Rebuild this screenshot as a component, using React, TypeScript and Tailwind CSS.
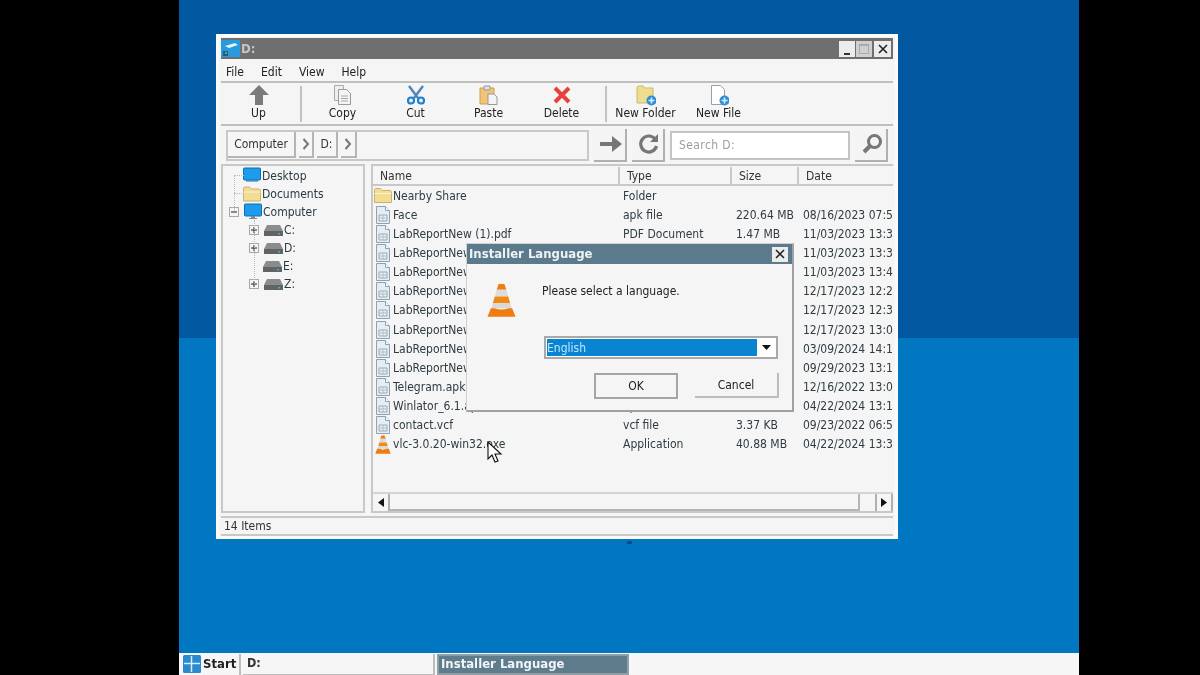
import React from 'react';

const rows = [
  { name: 'Nearby Share', type: 'Folder', size: '', date: '', icon: 'folder' },
  { name: 'Face', type: 'apk file', size: '220.64 MB', date: '08/16/2023 07:52', icon: 'file' },
  { name: 'LabReportNew (1).pdf', type: 'PDF Document', size: '1.47 MB', date: '11/03/2023 13:31', icon: 'file' },
  { name: 'LabReportNew (2).pdf', type: 'PDF Document', size: '1.47 MB', date: '11/03/2023 13:35', icon: 'file' },
  { name: 'LabReportNew (3).pdf', type: 'PDF Document', size: '1.47 MB', date: '11/03/2023 13:42', icon: 'file' },
  { name: 'LabReportNew (4).pdf', type: 'PDF Document', size: '1.47 MB', date: '12/17/2023 12:20', icon: 'file' },
  { name: 'LabReportNew (5).pdf', type: 'PDF Document', size: '1.47 MB', date: '12/17/2023 12:31', icon: 'file' },
  { name: 'LabReportNew (6).pdf', type: 'PDF Document', size: '1.47 MB', date: '12/17/2023 13:05', icon: 'file' },
  { name: 'LabReportNew (7).pdf', type: 'PDF Document', size: '1.47 MB', date: '03/09/2024 14:12', icon: 'file' },
  { name: 'LabReportNew (8).pdf', type: 'PDF Document', size: '1.47 MB', date: '09/29/2023 13:14', icon: 'file' },
  { name: 'Telegram.apk', type: 'apk file', size: '70.12 MB', date: '12/16/2022 13:02', icon: 'file' },
  { name: 'Winlator_6.1.apk', type: 'apk file', size: '80.50 MB', date: '04/22/2024 13:11', icon: 'file' },
  { name: 'contact.vcf', type: 'vcf file', size: '3.37 KB', date: '09/23/2022 06:58', icon: 'file' },
  { name: 'vlc-3.0.20-win32.exe', type: 'Application', size: '40.88 MB', date: '04/22/2024 13:33', icon: 'cone' },
];

const FileIcon = () => (
  <svg width="14" height="18" viewBox="0 0 14 18" className="shrink-0">
    <path d="M.5.5h9l4 4v13H.5z" fill="#e6eef4" stroke="#8da3b3" />
    <path d="M9.5.5v4h4" fill="#fff" stroke="#8da3b3" />
    <path d="M3 9h8v6H3z" fill="none" stroke="#9aa9b4" />
    <path d="M3 12h8M7 9v6" stroke="#b4bfc7" />
  </svg>
);

const FolderIcon = ({ w = 18, h = 17 }: { w?: number; h?: number }) => (
  <svg width={w} height={h} viewBox="0 0 18 15" className="shrink-0">
    <path d="M.5 14.5V1.500l1-1h5l2 2h8l1 1v11z" fill="#f3dc95" stroke="#c9b26b" />
    <path d="M.5 5.500h17" stroke="#fff3c8" />
  </svg>
);

const Cone = ({ size = 16 }: { size?: number }) => (
  <svg width={size} height={size * 1.2} viewBox="0 0 30 36" className="shrink-0">
    <path d="M12 1h6l2 6H10z" fill="#ee7d11" />
    <path d="M10 7h10l2 7H8z" fill="#dcdcdc" />
    <path d="M8 14h14l2 7H6z" fill="#f08a16" />
    <path d="M6 21h18l1.500 5h-21z" fill="#d9d9d9" />
    <path d="M4 26h4q7 3 14 0h4l3.500 9H.5z" fill="#ee7d11" />
  </svg>
);

const Drive = () => (
  <svg width="19" height="11" viewBox="0 0 19 11" className="shrink-0">
    <path d="M3 0h13l3 6v5H0V6z" fill="#8c8c8c" />
    <path d="M0 6h19v5H0z" fill="#5f6466" />
    <path d="M14 8h2v1.500h-2z" fill="#35c0a0" />
  </svg>
);

const Monitor = ({ stand = false }: { stand?: boolean }) => (
  <svg width="18" height="18" viewBox="0 0 18 18" className="shrink-0">
    <rect x="0.500" y="1" width="17" height="12" rx="1" fill="#1e9bea" stroke="#0b6fb3" />
    {stand ? <path d="M7 13h4v2h2v1H5v-1h2z" fill="#7d8a93" /> : <path d="M3 13.500h12v1H3z" fill="#0b6fb3" />}
  </svg>
);

const Expander = ({ minus = false }: { minus?: boolean }) => (
  <span className="flex h-[10px] w-[10px] shrink-0 items-center justify-center border border-[#a9a9a9] bg-[#f4f4f4]">
    <svg width="8" height="8" viewBox="0 0 8 8">
      <path d={minus ? 'M1 4h6' : 'M1 4h6M4 1v6'} stroke="#222" strokeWidth="1" />
    </svg>
  </span>
);

const ToolButton = ({ label, children }: { label: string; children: React.ReactNode }) => (
  <div className="flex w-[73px] shrink-0 flex-col items-center self-start pt-[1px]">
    <div className="flex h-[22px] items-center justify-center">{children}</div>
    <span className="text-[12px] leading-[14px] text-[#222] whitespace-nowrap">{label}</span>
  </div>
);

const Separator = () => <div className="h-[36px] w-[2px] shrink-0 self-center bg-[#c2c2c2]" />;

const PlusBadge = () => (
  <svg x="10" y="11" width="11" height="11" viewBox="0 0 11 11">
    <circle cx="5.500" cy="5.500" r="5" fill="#2d8fd0" />
    <path d="M5.500 2.500v6M2.500 5.500h6" stroke="#d6eeff" strokeWidth="1.600" />
  </svg>
);

const Crumb = ({ w, children }: { w: string; children: React.ReactNode }) => (
  <div className={`flex h-[26px] items-center justify-center border-r-2 border-b-2 border-[#b5b5b5] bg-[#f6f6f6] text-[12px] text-[#333] ${w}`}>
    {children}
  </div>
);

const Chevron = () => (
  <svg width="8" height="12" viewBox="0 0 8 12">
    <path d="M1.500 1l4.500 5-4.500 5" fill="none" stroke="#777" strokeWidth="2" />
  </svg>
);

const Bevel = ({ children }: { children: React.ReactNode }) => (
  <div className="flex h-[33px] w-[33px] shrink-0 items-center justify-center border-r-2 border-b-2 border-[#b0b0b0] bg-[#f4f4f4] pl-[3px]">
    {children}
  </div>
);

const TreeItem = ({ indent, label, children }: { indent: string; label: string; children: React.ReactNode }) => (
  <div className={`flex h-[18px] items-center gap-[1px] ${indent}`}>
    {children}
    <span className="text-[12px] leading-[18px] text-[#2b3a42]">{label}</span>
  </div>
);

export default function App() {
  return (
    <div className="flex h-[675px] w-[1200px] overflow-hidden bg-black font-['DejaVu_Sans_Condensed','DejaVu_Sans',sans-serif] blur-[0.5px]">
      <div className="w-[179px] shrink-0" />
      <div className="relative flex w-[900px] shrink-0 flex-col">
        <div className="h-[338px] bg-[#0158a1]" />
        <div className="flex-1 bg-[#0277c1]" />

        {/* Taskbar */}
        <div className="flex h-[22px] items-center gap-[2px] bg-[#f6f6f6] pl-[4px] font-bold text-[12.5px]">
          <div className="flex h-[21px] w-[58px] items-center gap-[2px] border-r-2 border-[#bdbdbd]">
            <svg width="18" height="18" viewBox="0 0 18 18" className="shrink-0">
              <rect width="18" height="18" rx="1.500" fill="#2a8ad0" />
              <path d="M8.500 1v16M1 8.500h16" stroke="#d8ecfa" strokeWidth="1.500" />
            </svg>
            <span className="text-[13px] text-[#1f1f1f]">Start</span>
          </div>
          <div className="flex h-[21px] w-[192px] items-center border-r-2 border-b border-[#bdbdbd] pl-[4px] text-[#333]">D:</div>
          <div className="flex h-[21px] w-[192px] items-center border-2 border-[#8f9fa8] bg-[#5f7c8d] pl-[2px] text-[13px] text-[#f2f5f7]">
            Installer Language
          </div>
        </div>

        {/* Explorer window */}
        <div className="absolute left-[37px] top-[34px] flex h-[505px] w-[682px] flex-col border-[3px] border-[#fbfbfb] bg-[#f5f5f5] px-[2px] pt-[1px]">
          <div className="flex h-[21px] shrink-0 items-center justify-between bg-[#6f6f6f] pr-[2px]">
            <div className="flex items-center gap-[1px]">
              <svg width="19" height="17" viewBox="0 0 19 17">
                <rect width="19" height="17" fill="#2a9ae0" />
                <path d="M4 6l10-3 3 2-9 3z" fill="#e6f3fb" />
                <path d="M2 11h5v5H2z" fill="#1c5a8f" />
                <path d="M4 12h2v2H4z" fill="#56b848" />
              </svg>
              <span className="text-[13px] font-bold text-[#c6c6c6]">D:</span>
            </div>
            <div className="flex items-center gap-[1px]">
              <div className="flex h-[16px] w-[16px] items-end justify-center bg-[#ececec] pb-[2px]"><div className="h-[2px] w-[6px] bg-[#333]" /></div>
              <div className="flex h-[16px] w-[16px] items-center justify-center bg-[#cfcfcf]"><div className="h-[10px] w-[10px] border border-t-2 border-[#aaa]" /></div>
              <div className="ml-[1px] flex h-[16px] w-[17px] items-center justify-center bg-[#ececec]">
                <svg width="10" height="10" viewBox="0 0 10 10"><path d="M1 1l8 8M9 1l-8 8" stroke="#222" strokeWidth="1.600" /></svg>
              </div>
            </div>
          </div>

          <div className="flex h-[24px] shrink-0 items-center gap-[17px] border-b-2 border-[#bfbfbf] pl-[5px] pt-[3px] text-[12px] text-[#222]">
            <span>File</span>
            <span>Edit</span>
            <span>View</span>
            <span>Help</span>
          </div>

          <div className="flex h-[43px] shrink-0 items-center border-b-2 border-[#bfbfbf] pl-[1px]">
            <ToolButton label="Up">
              <svg width="20" height="20" viewBox="0 0 20 20">
                <path d="M10 0l10 10h-6v10H6V10H0z" fill="#7a7a7a" />
              </svg>
            </ToolButton>
            <div className="w-[5px]" />
            <Separator />
            <div className="w-[4px]" />
            <ToolButton label="Copy">
              <svg width="17" height="20" viewBox="0 0 17 20">
                <path d="M.5.5h9v15h-9z" fill="#eee" stroke="#aaa" />
                <path d="M4.500 4.500h8l4 4v11h-12z" fill="#f4f4f4" stroke="#9a9a9a" />
                <path d="M7 11h7M7 13.500h7M7 16h7" stroke="#a8a8a8" />
              </svg>
            </ToolButton>
            <ToolButton label="Cut">
              <svg width="18" height="20" viewBox="0 0 18 20">
                <path d="M2 1l9 12M16 1l-9 12" stroke="#4f86b4" strokeWidth="2.400" />
                <circle cx="4" cy="15.500" r="3" fill="none" stroke="#1f7fd0" strokeWidth="2.200" />
                <circle cx="14" cy="15.500" r="3" fill="none" stroke="#1f7fd0" strokeWidth="2.200" />
              </svg>
            </ToolButton>
            <ToolButton label="Paste">
              <svg width="19" height="20" viewBox="0 0 19 20">
                <path d="M1 3h14v16H1z" fill="#f1c477" stroke="#cf9d4e" />
                <path d="M5 1h6v4H5z" fill="#dfdfdf" stroke="#999" />
                <path d="M9 9h6l3 3v7.500H9z" fill="#f4f4f4" stroke="#999" />
              </svg>
            </ToolButton>
            <ToolButton label="Delete">
              <svg width="18" height="18" viewBox="0 0 18 18">
                <path d="M2 2l14 14M16 2L2 16" stroke="#e8403c" strokeWidth="4" />
              </svg>
            </ToolButton>
            <div className="w-[7px]" />
            <Separator />
            <div className="w-[2px]" />
            <ToolButton label="New Folder">
              <svg width="20" height="22" viewBox="0 0 20 22">
                <path d="M1 19V3l1-1h5l2 2h8v15z" fill="#eedd8f" stroke="#cdb96a" />
                <PlusBadge />
              </svg>
            </ToolButton>
            <ToolButton label="New File">
              <svg width="20" height="22" viewBox="0 0 20 22">
                <path d="M2.500 1.500h9l4 4v15h-13z" fill="#fff" stroke="#98a2a9" />
                <PlusBadge />
              </svg>
            </ToolButton>
          </div>

          <div className="flex h-[38px] shrink-0 items-center pl-[5px]">
            <div className="flex h-[31px] w-[363px] shrink-0 items-center gap-[3px] border-2 border-[#c8c8c8]">
              <Crumb w="w-[68px]">Computer</Crumb>
              <Crumb w="w-[15px]"><Chevron /></Crumb>
              <Crumb w="w-[21px]">D:</Crumb>
              <Crumb w="w-[16px]"><Chevron /></Crumb>
            </div>
            <div className="ml-[5px]">
              <Bevel>
                <svg width="24" height="20" viewBox="0 0 24 20"><path d="M1 8h12V2l10 8-10 8v-6H1z" fill="#767676" /></svg>
              </Bevel>
            </div>
            <div className="ml-[5px]">
              <Bevel>
                <svg width="22" height="22" viewBox="0 0 22 22">
                  <path d="M18.500 13a8 8 0 1 1-1.500-7" fill="none" stroke="#767676" strokeWidth="3.200" />
                  <path d="M20 1v8h-8z" fill="#767676" />
                </svg>
              </Bevel>
            </div>
            <div className="ml-[5px] flex h-[29px] w-[180px] shrink-0 items-center border-2 border-[#c4c4c4] bg-white pl-[7px] text-[12px] tracking-[0.4px] text-[#9d9d9d]">
              Search D:
            </div>
            <div className="ml-[5px]">
              <Bevel>
                <svg width="22" height="22" viewBox="0 0 22 22">
                  <circle cx="13.500" cy="8.500" r="6" fill="none" stroke="#777" strokeWidth="3" />
                  <path d="M9 13l-6 6" stroke="#777" strokeWidth="4" />
                </svg>
              </Bevel>
            </div>
          </div>

          <div className="flex min-h-0 flex-1 gap-[6px]">
            {/* Tree */}
            <div className="relative w-[144px] shrink-0 border-2 border-[#c8c8c8] pt-[1px]">
              <div className="absolute left-[11px] top-[9px] h-[36px] w-[1px] border-l border-dotted border-[#bbb]" />
              <div className="absolute left-[11px] top-[9px] w-[10px] border-t border-dotted border-[#bbb]" />
              <div className="absolute left-[11px] top-[27px] w-[10px] border-t border-dotted border-[#bbb]" />
              <div className="absolute left-[31px] top-[54px] h-[64px] w-[1px] border-l border-dotted border-[#bbb]" />
              <TreeItem indent="pl-[20px]" label="Desktop"><Monitor /></TreeItem>
              <TreeItem indent="pl-[20px]" label="Documents"><FolderIcon w={18} h={16} /></TreeItem>
              <TreeItem indent="pl-[6px]" label="Computer">
                <Expander minus />
                <span className="w-[3px]" />
                <Monitor stand />
              </TreeItem>
              <TreeItem indent="pl-[26px]" label="C:"><Expander /><span className="w-[3px]" /><Drive /></TreeItem>
              <TreeItem indent="pl-[26px]" label="D:"><Expander /><span className="w-[3px]" /><Drive /></TreeItem>
              <TreeItem indent="pl-[40px]" label="E:"><Drive /></TreeItem>
              <TreeItem indent="pl-[26px]" label="Z:"><Expander /><span className="w-[3px]" /><Drive /></TreeItem>
            </div>

            {/* File list */}
            <div className="relative flex min-w-0 flex-1 flex-col overflow-hidden border-2 border-[#c8c8c8] border-r-0">
              <div className="flex h-[20px] shrink-0 items-center border-b-2 border-[#c8c8c8] pt-[2px] text-[12px] text-[#333]">
                <div className="w-[247px] shrink-0 border-r-2 border-[#c8c8c8] pl-[7px]">Name</div>
                <div className="w-[112px] shrink-0 border-r-2 border-[#c8c8c8] pl-[7px]">Type</div>
                <div className="w-[67px] shrink-0 border-r-2 border-[#c8c8c8] pl-[7px]">Size</div>
                <div className="flex-1 pl-[7px]">Date</div>
              </div>
              <div className="flex-1 overflow-hidden">
                {rows.map((r) => (
                  <div key={r.name} className="flex h-[19.15px] items-center whitespace-nowrap text-[12px] text-[#2f3b42]">
                    <div className="flex w-[250px] shrink-0 items-center gap-[2px] overflow-hidden pl-[1px]">
                      <span className="flex w-[17px] shrink-0 justify-center">
                        {r.icon === 'folder' ? <FolderIcon /> : r.icon === 'cone' ? <Cone /> : <FileIcon />}
                      </span>
                      {r.name}
                    </div>
                    <div className="w-[112px] shrink-0">{r.type}</div>
                    <div className="w-[67px] shrink-0 pl-[1px]">{r.size}</div>
                    <div className="flex-1 overflow-hidden pl-[1px]">{r.date}</div>
                  </div>
                ))}
              </div>
              <div className="flex h-[19px] shrink-0 items-center border-t-2 border-[#d4d4d4]">
                <div className="flex h-full w-[17px] items-center justify-center border-r-2 border-[#b0b0b0]">
                  <svg width="6" height="9" viewBox="0 0 6 9"><path d="M6 0v9L0 4.500z" fill="#111" /></svg>
                </div>
                <div className="h-full w-[470px] border-r-2 border-b-2 border-[#b5b5b5]" />
                <div className="flex-1" />
                <div className="flex h-full w-[18px] items-center justify-center border-l-2 border-r-2 border-[#b0b0b0]">
                  <svg width="6" height="9" viewBox="0 0 6 9"><path d="M0 0v9l6-4.500z" fill="#111" /></svg>
                </div>
              </div>
            </div>
          </div>

          <div className="mt-[3px] flex h-[20px] shrink-0 items-center border-t-2 border-b-2 border-[#c8c8c8] pl-[3px] text-[12px] text-[#333]">
            14 Items
          </div>
        </div>

        {/* Installer dialog */}
        <div className="absolute left-[287px] top-[243px] flex h-[169px] w-[328px] flex-col border border-r-2 border-b-2 border-[#a0a0a0] border-t-[#d0d0d0] border-l-[#d0d0d0] bg-[#f5f5f5]">
          <div className="flex h-[20px] shrink-0 items-center justify-between bg-[#5b7a8c] pl-[2px] pr-[4px]">
            <span className="text-[13px] font-bold text-[#eef3f6]">Installer Language</span>
            <div className="flex h-[15px] w-[16px] items-center justify-center bg-[#ececec]">
              <svg width="10" height="10" viewBox="0 0 10 10"><path d="M1 1l8 8M9 1l-8 8" stroke="#222" strokeWidth="1.600" /></svg>
            </div>
          </div>
          <div className="relative flex h-[72px] items-start pl-[20px] pt-[19px]">
            <Cone size={29} />
            <span className="ml-[26px] mt-[-1px] text-[12px] text-[#222]">Please select a language.</span>
          </div>
          <div className="ml-[77px] flex h-[23px] w-[234px] items-center border-2 border-[#a9a9a9] bg-white pl-[1px]">
            <div className="flex h-[17px] flex-1 items-center bg-[#0a84d0] text-[12px] text-[#bfe6ff]">English</div>
            <div className="flex h-[17px] w-[19px] items-center justify-center">
              <svg width="9" height="5" viewBox="0 0 9 5"><path d="M0 0h9L4.500 5z" fill="#111" /></svg>
            </div>
          </div>
          <div className="ml-[127px] mt-[14px] flex gap-[17px] text-[12px] text-[#222]">
            <div className="flex h-[26px] w-[84px] items-center justify-center border-2 border-[#a5a5a5]">OK</div>
            <div className="flex h-[25px] w-[84px] items-center justify-center border-r-2 border-b-2 border-[#bdbdbd]">Cancel</div>
          </div>
        </div>

        {/* Mouse cursor */}
        <svg width="16" height="23" viewBox="0 0 16 23" className="absolute left-[308px] top-[441px]">
          <path d="M1 1v17l4-4 3 7 3-1-3-7h6z" fill="#fff" stroke="#111" strokeWidth="1.100" />
        </svg>
        <div className="absolute left-[448px] top-[541px] h-[3px] w-[5px] rounded-full bg-[#03497f]" />
      </div>
      <div className="flex-1" />
    </div>
  );
}
